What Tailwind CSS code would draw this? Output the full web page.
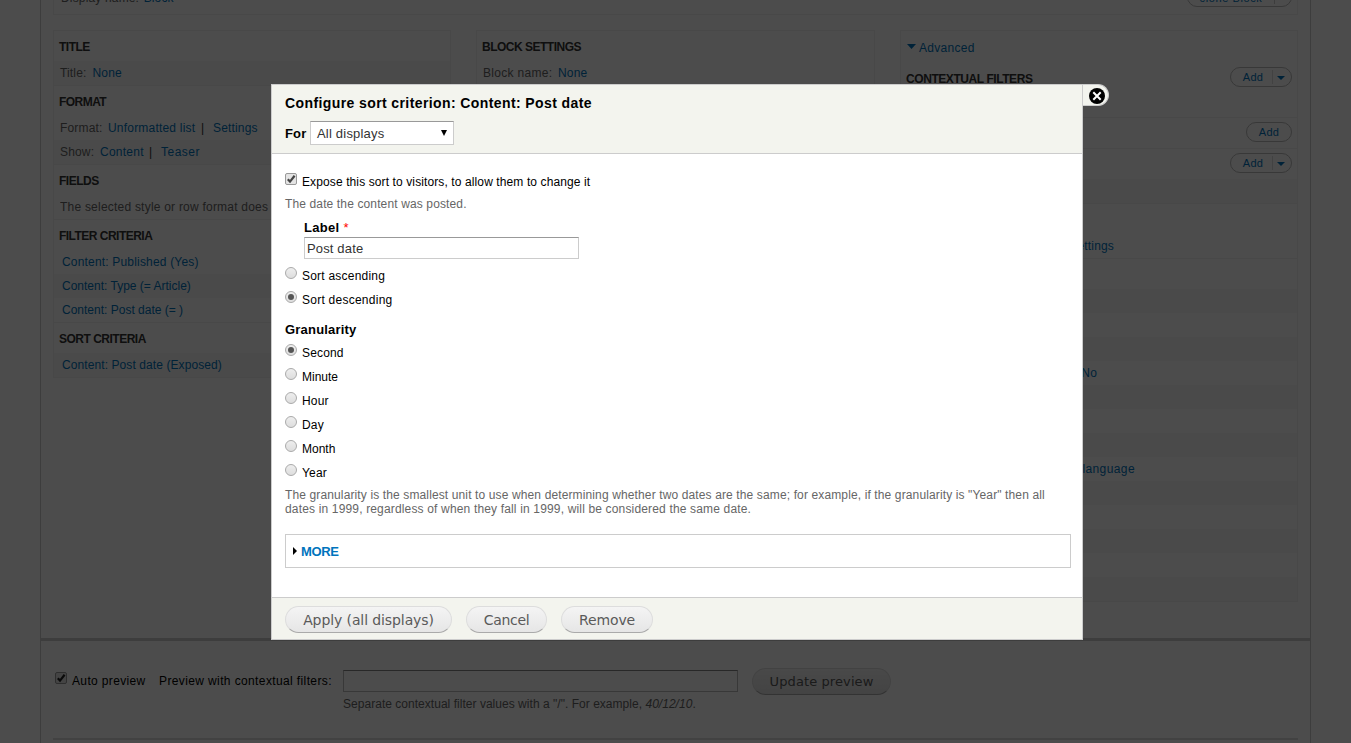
<!DOCTYPE html>
<html lang="en">
<head>
<meta charset="utf-8">
<title>Configure sort criterion: Content: Post date</title>
<script src="https://cdn.jsdelivr.net/npm/@tailwindcss/browser@4"></script>
</head>
<body class="relative h-[743px] w-[1351px] overflow-hidden bg-white font-['Liberation_Sans',Arial,sans-serif] text-[12px] leading-[24px] tracking-[0.16px] whitespace-nowrap text-[#666]">

<!-- Views administration page -->
<div class="ml-10 flex h-[743px] w-[1271px] flex-col border-x border-[#ccc]">
  <div class="mx-3 flex h-[15px] shrink-0 items-end justify-between border border-t-0 border-[#f0f0f0] pr-[5px] pl-[7px]">
    <div class="pb-[4px] leading-[24px]"><span>Display name:</span> <span class="ml-px text-[#0074bd]">Block</span></div>
    <div class="mb-[7px] flex h-[20px] w-[105px] shrink-0 items-center rounded-full border border-[#bbb] text-[#0074bd]">
      <span class="w-[86px] text-center text-[11px] leading-[16px] tracking-[0.6px]"><span class="block pt-[2px]">clone Block</span></span>
      <span class="h-[14px] w-px bg-[#ccc]"></span>
    </div>
  </div>

  <div class="mx-3 mt-[15px] flex h-[608px] shrink-0 items-start">
    <!-- Left column -->
    <div class="w-[398px] border border-[#f0f0f0]">
      <h3 class="h-[30px] pt-[4px] pl-[5px] font-bold tracking-[-0.5px] text-[#333]">TITLE</h3>
      <div class="flex h-[25px] gap-[6px] border-b border-[#f0f0f0] bg-[#f8f8f8] pl-[6px]"><span>Title:</span><span class="text-[#0074bd]">None</span></div>
      <h3 class="h-[30px] pt-[4px] pl-[5px] font-bold tracking-[-0.55px] text-[#333]">FORMAT</h3>
      <div class="flex h-[24px] pl-[6px]"><span class="w-[48px]">Format:</span><span class="w-[93px] tracking-[0.2px] text-[#0074bd]">Unformatted list</span><span class="w-[12px] text-[#333]">|</span><span class="text-[#0074bd]">Settings</span></div>
      <div class="flex h-[25px] border-b border-[#f0f0f0] bg-[#f8f8f8] pl-[6px]"><span class="w-[40px]">Show:</span><span class="w-[49px] tracking-[0.25px] text-[#0074bd]">Content</span><span class="w-[12px] text-[#333]">|</span><span class="tracking-[0.5px] text-[#0074bd]">Teaser</span></div>
      <h3 class="h-[30px] pt-[4px] pl-[5px] font-bold tracking-[-0.5px] text-[#333]">FIELDS</h3>
      <div class="h-[25px] border-b border-[#f0f0f0] pl-[6px] tracking-[0.22px]"><div class="w-[213px] overflow-hidden">The selected style or row format does not utilize fields.</div></div>
      <h3 class="h-[30px] pt-[4px] pl-[5px] font-bold tracking-[-0.52px] text-[#333]">FILTER CRITERIA</h3>
      <div class="h-[24px] pl-[8px] tracking-[0.18px] text-[#0074bd]">Content: Published (Yes)</div>
      <div class="h-[24px] bg-[#f8f8f8] pl-[8px] tracking-[0px] text-[#0074bd]">Content: Type (= Article)</div>
      <div class="h-[25px] border-b border-[#f0f0f0] pl-[8px] tracking-[0px] text-[#0074bd]">Content: Post date (= )</div>
      <h3 class="h-[30px] pt-[4px] pl-[5px] font-bold tracking-[-0.5px] text-[#333]">SORT CRITERIA</h3>
      <div class="h-[24px] bg-[#f8f8f8] pl-[8px] tracking-[0.09px] text-[#0074bd]">Content: Post date (Exposed)</div>
    </div>

    <!-- Middle column -->
    <div class="ml-[25px] h-[300px] w-[399px] border border-[#f0f0f0]">
      <h3 class="h-[30px] pt-[4px] pl-[5px] font-bold tracking-[-0.5px] text-[#333]">BLOCK SETTINGS</h3>
      <div class="flex h-[24px] pl-[6px]"><span class="w-[75px] tracking-[0.3px]">Block name:</span><span class="text-[#0074bd]">None</span></div>
    </div>

    <!-- Right column -->
    <div class="ml-[25px] w-[398px] border border-[#f0f0f0]">
      <div class="flex h-[33px] items-center gap-[3px] pl-[6px] text-[#0074bd]">
        <svg class="mb-[2px] h-[5px] w-[9px]" viewBox="0 0 9 5"><path d="M0 0H9L4.5 5Z" fill="#0074bd"/></svg>
        <span class="tracking-[0.3px]">Advanced</span>
      </div>
      <div class="flex h-[54px] justify-between border-b border-[#f0f0f0] pr-[5px] pl-[5px]">
        <h3 class="pt-[3px] font-bold tracking-[-0.43px] text-[#333]">CONTEXTUAL FILTERS</h3>
        <div class="mt-[3px] flex h-[20px] w-[62px] items-center rounded-full border border-[#bbb] text-[#0074bd]">
          <span class="w-[41px] pl-[3px] text-center text-[11px] leading-[18px] tracking-[0.3px]">Add</span>
          <span class="h-[14px] w-px bg-[#ddd]"></span>
          <svg class="mt-px ml-[4px] h-[4px] w-[8px]" viewBox="0 0 8 4"><path d="M0 0H8L4 4Z" fill="#0074bd"/></svg>
        </div>
      </div>
      <div class="flex h-[31px] justify-between border-b border-[#f0f0f0] pr-[5px] pl-[5px]">
        <h3 class="pt-[3px] font-bold tracking-[-0.43px] text-[#333]">RELATIONSHIPS</h3>
        <div class="mt-[4px] flex h-[20px] w-[46px] justify-center rounded-full border border-[#bbb] text-[#0074bd]"><span class="text-[11px] leading-[18px] tracking-[0.3px]">Add</span></div>
      </div>
      <div class="flex h-[30px] justify-between pr-[5px] pl-[5px]">
        <h3 class="pt-[3px] font-bold tracking-[-0.43px] text-[#333]">NO RESULTS BEHAVIOR</h3>
        <div class="mt-[4px] flex h-[20px] w-[62px] items-center rounded-full border border-[#bbb] text-[#0074bd]">
          <span class="w-[41px] pl-[3px] text-center text-[11px] leading-[18px] tracking-[0.3px]">Add</span>
          <span class="h-[14px] w-px bg-[#ddd]"></span>
          <svg class="mt-px ml-[4px] h-[4px] w-[8px]" viewBox="0 0 8 4"><path d="M0 0H8L4 4Z" fill="#0074bd"/></svg>
        </div>
      </div>
      <div class="h-[25px] border-b border-[#f0f0f0] bg-[#f8f8f8] pl-[6px]"></div>
      <h3 class="h-[30px] pt-[3px] pl-[5px] font-bold tracking-[-0.5px] text-[#333]">EXPOSED FORM</h3>
      <div class="h-[25px] border-b border-[#f0f0f0]"><div class="w-[213px] text-right text-[#0074bd]">Settings</div></div>
      <h3 class="h-[30px] pt-[3px] pl-[5px] font-bold tracking-[-0.5px] text-[#333]">OTHER</h3>
      <div class="h-[24px] bg-[#f8f8f8] pl-[6px]">Machine Name:</div>
      <div class="h-[24px] pl-[6px]">Comment:</div>
      <div class="h-[24px] bg-[#f8f8f8] pl-[6px]">Use AJAX:</div>
      <div class="h-[24px]"><div class="w-[196px] text-right text-[#0074bd]">No</div></div>
      <div class="h-[24px] bg-[#f8f8f8] pl-[6px]">Use aggregation:</div>
      <div class="h-[24px] pl-[6px]">Query settings:</div>
      <div class="h-[24px] bg-[#f8f8f8] pl-[6px]">Caching:</div>
      <div class="h-[24px]"><div class="w-[234px] text-right tracking-[0.4px] text-[#0074bd]">Current user's language</div></div>
      <div class="h-[24px] bg-[#f8f8f8] pl-[6px]">Link display:</div>
      <div class="h-[24px] pl-[6px]">CSS class:</div>
      <div class="h-[24px] bg-[#f8f8f8] pl-[6px]">Theme:</div>
      <div class="h-[24px] pl-[6px]">Block caching:</div>
      <div class="h-[24px] bg-[#f8f8f8] pl-[6px]">Output:</div>
    </div>
  </div>

  <!-- Preview controls -->
  <div class="h-[105px] shrink-0 border-t-3 border-[#ccc] pl-[14px] text-black">
    <div class="mt-[25px] flex h-[30px] items-center">
      <svg class="mb-[7px] h-[12px] w-[12px]" viewBox="0 0 12 12"><rect x=".5" y=".5" width="11" height="11" rx="1.5" fill="#e4e4e4" stroke="#999"/><path d="M2.8 6.3L5 8.6L9.6 2.8" fill="none" stroke="#222" stroke-width="2.2"/></svg>
      <span class="ml-[5px] w-[87px] tracking-[0.35px]">Auto preview</span>
      <span class="w-[184px] tracking-[0.38px]">Preview with contextual filters:</span>
      <span class="h-[22px] w-[395px] border border-[#bbb] border-t-[#888] bg-white"></span>
      <span class="ml-[14px] h-[27px] w-[139px] rounded-full border border-[#ddd] border-b-[#aaa] bg-linear-to-b from-[#f4f4f4] to-[#e2e2e2] text-center font-['DejaVu_Sans',Verdana,sans-serif] text-[13px] leading-[26px] tracking-[0.1px] text-[#5a5a5a]">Update preview</span>
    </div>
    <div class="-mt-[2px] pl-[288px] leading-[20px] tracking-[0.03px] text-[#666]">Separate contextual filter values with a "/". For example, <i>40/12/10</i>.</div>
  </div>
  <div class="mx-3 mt-[-5px] h-[2px] shrink-0 bg-[#ddd]"></div>
</div>

<!-- Backdrop -->
<div class="absolute inset-0 bg-black/70"></div>

<!-- Dialog -->
<div class="absolute top-[84px] left-[271px] flex h-[556px] w-[812px] flex-col border border-[#ccc] bg-white text-black">
  <div class="h-[69px] shrink-0 border-b border-[#ccc] bg-[#f3f4ee] px-[13px]">
    <h1 class="pt-[8px] text-[14px] leading-[20px] font-bold tracking-[0.4px]">Configure sort criterion: Content: Post date</h1>
    <div class="mt-[8px] flex h-[24px] items-center">
      <span class="w-[25px] pt-px text-[13px] font-bold">For</span>
      <span class="flex h-[24px] w-[144px] items-center justify-between border border-[#ccc] border-t-[#999] bg-white pr-[6px] pl-[6px] text-[13px] tracking-[0.2px] text-[#333]"><span class="pt-px">All displays</span>
        <svg class="h-[6px] w-[6px]" viewBox="0 0 6 6"><path d="M0 0H6L3 6Z" fill="#000"/></svg>
      </span>
    </div>
  </div>

  <div class="flex grow flex-col pt-[16px] pr-[11px] pl-[13px]">
    <div class="flex h-[24px] gap-[5px]"><svg class="mt-[3px] h-[12px] w-[12px]" viewBox="0 0 12 12"><rect x=".5" y=".5" width="11" height="11" rx="1.5" fill="#e4e4e4" stroke="#999"/><path d="M2.8 6.3L5 8.6L9.6 2.8" fill="none" stroke="#444" stroke-width="2.2"/></svg><span class="tracking-[0.11px]">Expose this sort to visitors, to allow them to change it</span></div>
    <div class="h-[20px] leading-[20px] tracking-[0.13px] text-[#666]">The date the content was posted.</div>
    <div class="mt-[4px] ml-[19px] h-[19px] text-[13px] leading-[20px] font-bold tracking-[0.3px]">Label <span class="font-normal text-[#f00]">*</span></div>
    <div class="ml-[19px] h-[22px] w-[275px] border border-[#ccc] border-t-[#999] pl-[2px] text-[13px] leading-[21px] tracking-[0.15px] text-[#333]">Post date</div>
    <div class="mt-[5px] flex h-[24px] gap-[5px]"><span class="mt-[3px] size-[12px] rounded-full border border-[#aaa] bg-linear-to-b from-[#eee] to-[#ddd]"></span><span class="tracking-[0.22px]">Sort ascending</span></div>
    <div class="flex h-[24px] gap-[5px]"><span class="mt-[3px] flex size-[12px] items-center justify-center rounded-full border border-[#aaa] bg-linear-to-b from-[#eee] to-[#ddd]"><span class="size-[6px] rounded-full bg-[#555]"></span></span><span class="tracking-[0.25px]">Sort descending</span></div>
    <div class="mt-[6px] h-[23px] text-[13px] font-bold tracking-[0.2px]">Granularity</div>
    <div class="flex h-[24px] gap-[5px]"><span class="mt-[3px] flex size-[12px] items-center justify-center rounded-full border border-[#aaa] bg-linear-to-b from-[#eee] to-[#ddd]"><span class="size-[6px] rounded-full bg-[#555]"></span></span><span>Second</span></div>
    <div class="flex h-[24px] gap-[5px]"><span class="mt-[3px] size-[12px] rounded-full border border-[#aaa] bg-linear-to-b from-[#eee] to-[#ddd]"></span><span class="tracking-[0px]">Minute</span></div>
    <div class="flex h-[24px] gap-[5px]"><span class="mt-[3px] size-[12px] rounded-full border border-[#aaa] bg-linear-to-b from-[#eee] to-[#ddd]"></span><span>Hour</span></div>
    <div class="flex h-[24px] gap-[5px]"><span class="mt-[3px] size-[12px] rounded-full border border-[#aaa] bg-linear-to-b from-[#eee] to-[#ddd]"></span><span>Day</span></div>
    <div class="flex h-[24px] gap-[5px]"><span class="mt-[3px] size-[12px] rounded-full border border-[#aaa] bg-linear-to-b from-[#eee] to-[#ddd]"></span><span class="tracking-[0px]">Month</span></div>
    <div class="flex h-[24px] gap-[5px]"><span class="mt-[3px] size-[12px] rounded-full border border-[#aaa] bg-linear-to-b from-[#eee] to-[#ddd]"></span><span>Year</span></div>
    <div class="mt-[3px] leading-[14px] text-[#666]"><p class="tracking-[0.126px]">The granularity is the smallest unit to use when determining whether two dates are the same; for example, if the granularity is "Year" then all</p><p class="tracking-[0.16px]">dates in 1999, regardless of when they fall in 1999, will be considered the same date.</p></div>
    <div class="mt-[18px] flex h-[34px] items-center gap-[4px] border border-[#ccc] pl-[7px]">
      <svg class="h-[8px] w-[4px]" viewBox="0 0 4 8"><path d="M0 0L4 4L0 8Z" fill="#000"/></svg>
      <span class="pt-px text-[13px] font-bold tracking-[-0.4px] text-[#0074bd]">MORE</span>
    </div>
  </div>

  <div class="flex h-[42px] shrink-0 items-start gap-[14px] border-t border-[#ccc] bg-[#f3f4ee] pt-[8px] pl-[13px] font-['DejaVu_Sans',Verdana,sans-serif] text-[14px] leading-[26px] text-[#5a5a5a]">
    <span class="h-[27px] w-[167px] rounded-full border border-[#ddd] border-b-[#aaa] bg-linear-to-b from-[#f4f4f4] to-[#e6e6e6] text-center tracking-[-0.1px]">Apply (all displays)</span>
    <span class="h-[27px] w-[81px] rounded-full border border-[#ddd] border-b-[#aaa] bg-linear-to-b from-[#f4f4f4] to-[#e6e6e6] text-center tracking-[-0.3px]">Cancel</span>
    <span class="h-[27px] w-[92px] rounded-full border border-[#ddd] border-b-[#aaa] bg-linear-to-b from-[#f4f4f4] to-[#e6e6e6] text-center tracking-[-0.1px]">Remove</span>
  </div>

  <!-- Close tab -->
  <div class="absolute -top-px left-[811px] flex h-[22px] w-[26px] items-center rounded-r-full border border-l-0 border-[#ccc] bg-[#f3f4ee] pt-[2px] pl-[6px]">
    <svg class="size-[16px]" viewBox="0 0 16 16"><circle cx="8" cy="8" r="8" fill="#000"/><path d="M4.3 4.3L11.7 11.7M11.7 4.3L4.3 11.7" stroke="#fff" stroke-width="2"/></svg>
  </div>
</div>
</body>
</html>
